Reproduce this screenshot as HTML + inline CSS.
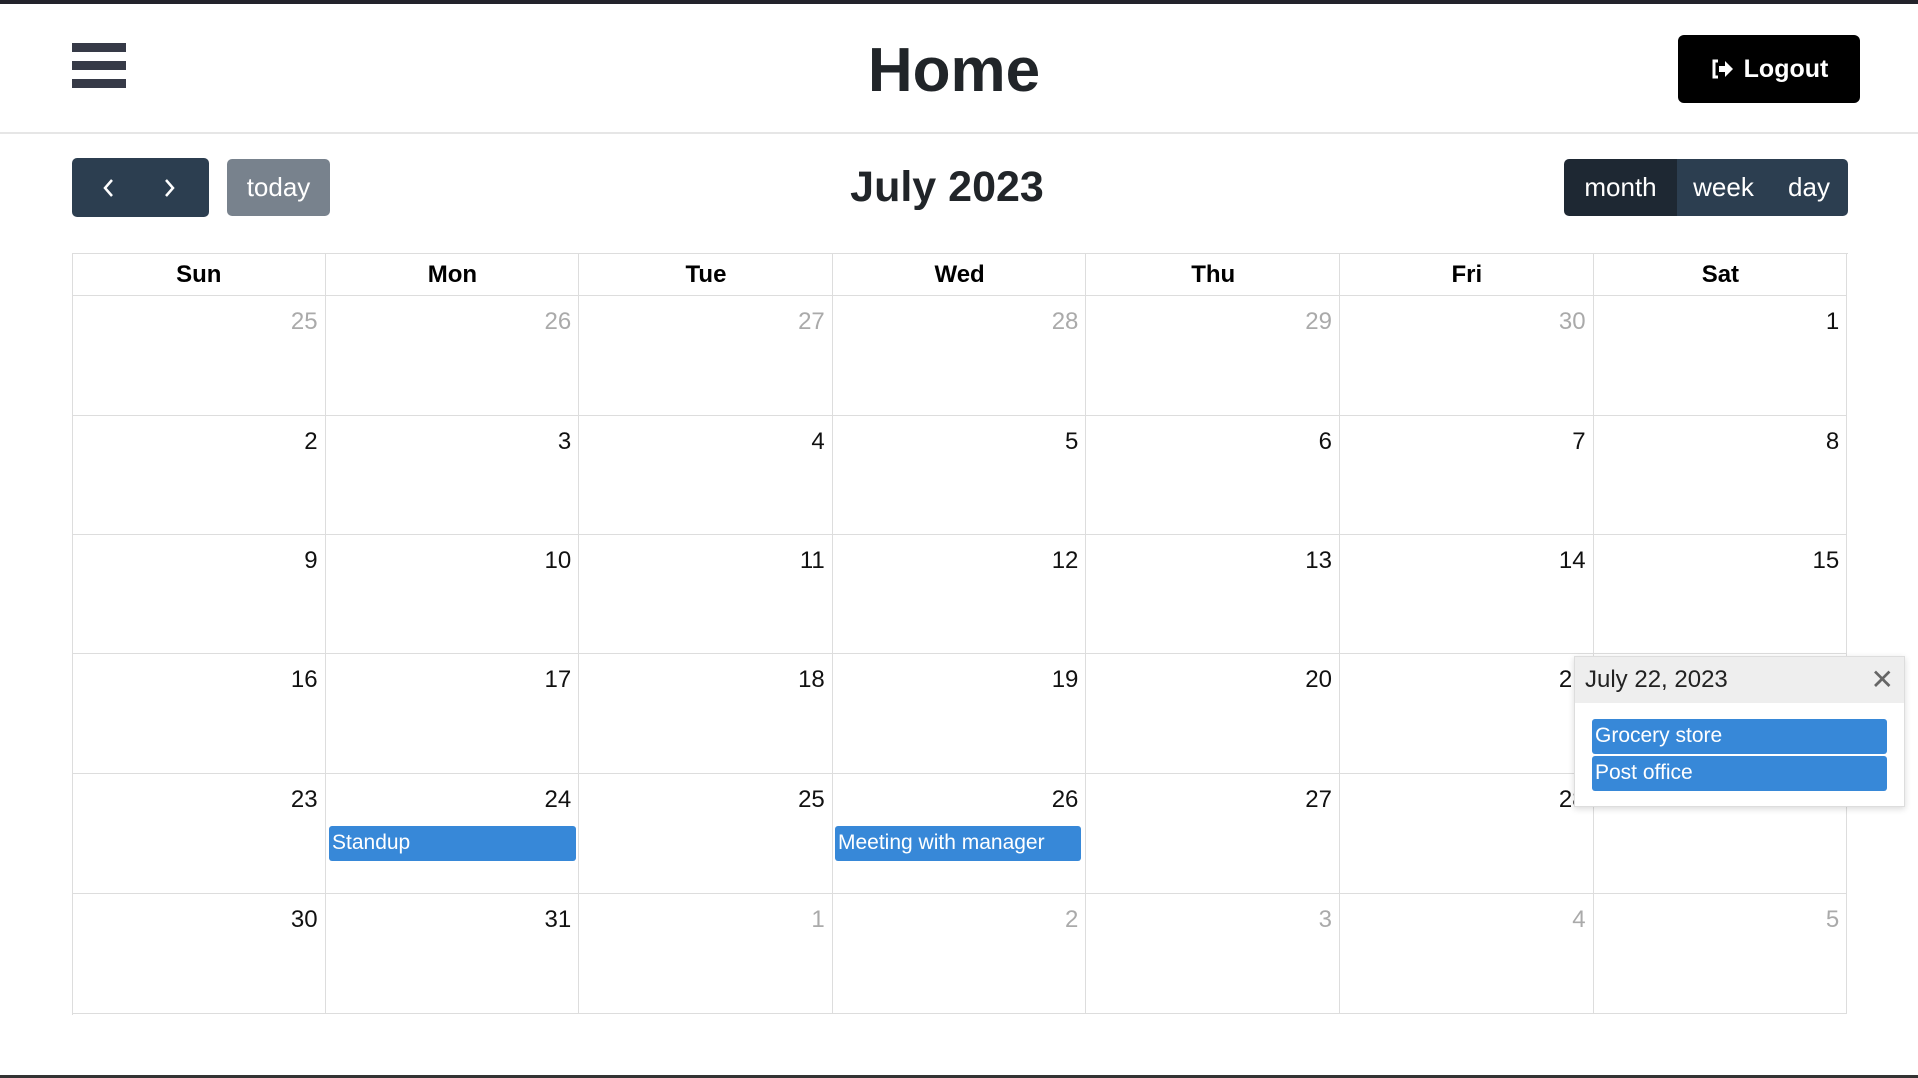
<!DOCTYPE html>
<html><head><meta charset="utf-8"><style>
*{box-sizing:border-box;margin:0;padding:0}
body{width:1918px;height:1078px;background:#fff;font-family:"Liberation Sans",sans-serif;position:relative;overflow:hidden;color:#212529}
.abs{position:absolute}
.topbar{left:0;top:0;width:1918px;height:4px;background:#23232b}
.botbar{left:0;top:1075px;width:1918px;height:3px;background:#333}
.hb{left:72px;width:54px;height:9px;background:#363a47}
.hdr{left:0;top:132px;width:1918px;height:2px;background:#e6e6e6}
.btn{display:flex;align-items:center;justify-content:center;color:#fff;border-radius:5px}
.cell{position:absolute;border-right:1px solid #ddd;border-bottom:1px solid #ddd}
.num{position:absolute;right:7px;top:12px;font-size:24px;color:#111}
.num.o{color:#aaa}
.dow{position:absolute;font-weight:bold;font-size:24px;color:#000;text-align:center;line-height:42px}
.ev{position:absolute;background:#3788d8;color:#fff;font-size:21px;border-radius:3px;padding-left:3px;line-height:34px;height:35px}
</style></head><body>
<div class="abs topbar"></div>
<div class="abs hb" style="top:43px"></div>
<div class="abs hb" style="top:61px"></div>
<div class="abs hb" style="top:79px"></div>
<div class="abs" style="left:0;top:42px;width:1908px;text-align:center;font-size:62px;font-weight:bold;line-height:58px;color:#212529">Home</div>
<div class="abs btn" style="left:1678px;top:35px;width:182px;height:68px;background:#000;font-weight:bold;font-size:25px;border-radius:6px">
<svg width="24" height="22" viewBox="0 0 24 22" style="margin-right:10px"><path d="M8 3H4v16h4" fill="none" stroke="#fff" stroke-width="3"/><path d="M9 8h6V3l8 8-8 8v-5H9z" fill="#fff"/></svg>Logout</div>
<div class="abs hdr"></div>
<div class="abs btn" style="left:72px;top:158px;width:137px;height:59px;background:#2c3e50">
<svg width="137" height="59"><path d="M111 178" /><path d="M112 0" /><path d="M40 22l-7 8 7 8" fill="none" stroke="#fff" stroke-width="2.5"/><path d="M100 22l7 8-7 8" fill="none" stroke="#fff" stroke-width="2.5" transform="translate(-6 0)"/></svg></div>
<div class="abs btn" style="left:227px;top:159px;width:103px;height:57px;background:#78828d;font-size:26px">today</div>
<div class="abs" style="left:0;top:162px;width:1894px;text-align:center;font-size:43px;font-weight:bold;line-height:50px">July 2023</div>
<div class="abs" style="left:1564px;top:159px;width:284px;height:57px;border-radius:5px;overflow:hidden;display:flex;font-size:26px;color:#fff">
<div style="width:113px;background:#1e2833;display:flex;align-items:center;justify-content:center">month</div>
<div style="width:93px;background:#2c3e50;display:flex;align-items:center;justify-content:center">week</div>
<div style="width:78px;background:#2c3e50;display:flex;align-items:center;justify-content:center">day</div>
</div>
<div class="abs" style="left:72px;top:253px;width:1776px;height:762px;border-top:1px solid #ddd;border-left:1px solid #ddd"></div>
<div id="cal"></div>
<script>
var L=72,W=253.6,rows=[296,416,535,654,774,894,1014];
var days=["Sun","Mon","Tue","Wed","Thu","Fri","Sat"],h="";
for(var c=0;c<7;c++){h+='<div class="cell" style="left:'+(L+c*W)+'px;top:254px;width:'+W+'px;height:42px"></div><div class="dow" style="left:'+(L+c*W)+'px;top:254px;width:'+W+'px">'+days[c]+'</div>';}
var n=[25,26,27,28,29,30,1];
var d=-5;
for(var r=0;r<6;r++){for(var c=0;c<7;c++){var v,o=false;if(r==0&&c<6){v=25+c;o=true}else{d++;v=d; if(r==0)v=1;}
if(r==0&&c==6){v=1;d=1;}
if(r>0){v=d; if(d>31){v=d-31;o=true}}
h+='<div class="cell" style="left:'+(L+c*W)+'px;top:'+rows[r]+'px;width:'+W+'px;height:'+(rows[r+1]-rows[r])+'px"><div class="num'+(o?' o':'')+'">'+v+'</div></div>';}}
document.getElementById('cal').innerHTML=h;
</script>
<div class="ev" style="left:329px;top:826px;width:247px">Standup</div>
<div class="ev" style="left:835px;top:826px;width:246px">Meeting with manager</div>
<div class="abs" style="left:1574px;top:656px;width:331px;height:151px;background:#fff;border:1px solid #ddd;box-shadow:0 2px 6px rgba(0,0,0,.15)">
<div style="height:46px;background:#eee;font-size:24px;line-height:46px;padding-left:10px;color:#222;position:relative">July 22, 2023<span style="position:absolute;right:10px;top:0;font-size:28px;color:#666">✕</span></div>
<div class="ev" style="left:17px;top:62px;width:295px">Grocery store</div>
<div class="ev" style="left:17px;top:99px;width:295px">Post office</div>
</div>
<div class="abs botbar"></div>
</body></html>
